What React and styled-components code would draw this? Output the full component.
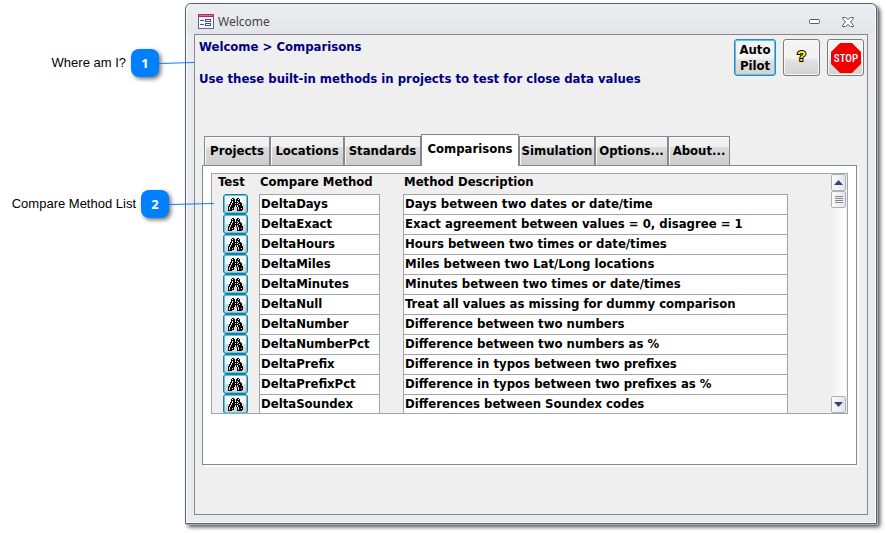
import React, { useState } from "react";
import styled, { createGlobalStyle, css } from "styled-components";

const navy = "#000080";
const face = "#efefef";
const line = "#85888f";
const soft = "#a3a4a8";
const blue = "#0080ff";

const GlobalStyle = createGlobalStyle`
  *, *::before, *::after { box-sizing: border-box; }
  body {
    margin: 0;
    background: #fff;
    color: #000;
    font: bold 13px/16px "DejaVu Sans Condensed", "DejaVu Sans", sans-serif;
  }
  button { font: inherit; color: inherit; padding: 0; margin: 0; }
`;

const Page = styled.main`
  display: grid;
  grid-template-columns: 185px 1fr;
  align-items: start;
  padding: 3px 9px 9px 0;
`;

/* Callouts beside the window */

const Callouts = styled.aside`
  display: flex;
  flex-direction: column;
  align-items: flex-end;
  gap: 113px;
  padding-top: 46px;
`;

const Callout = styled.div`
  position: relative;
  display: flex;
  align-items: center;
  gap: 5px;
  margin-right: ${(p) => p.$inset}px;
  font: 13px/16px "Liberation Sans", Arial, sans-serif;
  white-space: nowrap;
`;

const Badge = styled.span`
  width: 28px;
  height: 28px;
  border-radius: 8px;
  background: ${blue};
  box-shadow: 2px 2px 4px rgba(0, 0, 0, 0.55);
  color: #fff;
  font: bold 13px/28px "Noto Sans", sans-serif;
  text-align: center;
`;

const Leader = styled.svg`
  position: absolute;
  left: 100%;
  top: 12px;
  z-index: 1;
  width: ${(p) => p.$length}px;
  height: 4px;
  stroke: ${blue};
  overflow: visible;
`;

/* Window frame */

const Window = styled.section`
  padding: 0 8px 8px;
  border: 1px solid #5b616a;
  border-radius: 6px 6px 0 0;
  background: #e9ebf0;
  box-shadow: inset 0 0 0 1px #fff, 1px 1px 0 #a9afb8, 3px 3px 4px rgba(0, 0, 0, 0.7);
`;

const TitleBar = styled.header`
  display: flex;
  align-items: center;
  gap: 4px;
  height: 30px;
  margin: 0 -7px;
  padding: 5px 12px 0 11px;
  border-radius: 5px 5px 0 0;
  background: linear-gradient(#eceef1, #e3e5ea);
`;

const WindowTitle = styled.h1`
  flex: 1;
  margin: 0;
  color: #444;
  font: 12px/16px "Noto Sans", sans-serif;
`;

const FrameButton = styled.button`
  display: flex;
  align-items: center;
  justify-content: center;
  width: 30px;
  height: 18px;
  border: 0;
  background: none;
`;

const Client = styled.div`
  padding-bottom: 49px;
  border: 1px solid ${line};
  background: ${face};
`;

const Intro = styled.div`
  display: flex;
  justify-content: space-between;
  padding: 4px 3px 58px 4px;
  color: ${navy};
`;

const Headings = styled.div`
  display: flex;
  flex-direction: column;
  gap: 16px;
  height: 37px;
`;

const Heading = styled.p`
  margin: 0;
  white-space: nowrap;
`;

const Actions = styled.div`
  display: flex;
  gap: 7px;
  color: #000;
`;

const ActionButton = styled.button`
  display: flex;
  align-items: center;
  justify-content: center;
  width: ${(p) => (p.$wide ? 42 : 37)}px;
  height: 37px;
  border: 1px solid #7c7c7c;
  border-radius: 3px;
  background: linear-gradient(#f3f3f3 0 50%, #e0e0e0 60%, #d2d2d2);
  box-shadow: inset 0 0 0 1px #f8f8f8;
  ${(p) =>
    p.$wide &&
    css`
      border-color: #3c83ad;
      box-shadow: inset 0 0 0 1px #46ccf4;
    `}
`;

const HelpMark = styled.span`
  margin-bottom: 3px;
  color: #fff200;
  font: bold 15px/16px "Liberation Sans", Arial, sans-serif;
  -webkit-text-stroke: 2px #000;
  paint-order: stroke fill;
`;

/* Tabs */

const TabArea = styled.div`
  margin: 0 10px 0 7px;
`;

const TabList = styled.div`
  display: grid;
  grid-template-columns: 66px 74px 77px 98px 76px 73px 62px;
  align-items: end;
  height: 31px;
  padding-left: 2px;
`;

const Tab = styled.button`
  height: 29px;
  border: 1px solid ${line};
  border-width: 1px 1px 0;
  background: linear-gradient(#f0f0f0 0 35%, #dcdcdc 35%, #cdcdcd);
  box-shadow: inset 1px 1px 0 #fafafa;
  white-space: nowrap;
  ${(p) =>
    p.$active &&
    css`
      position: relative;
      height: 32px;
      margin-bottom: -1px;
      padding-bottom: 3px;
      background: #fff;
    `}
`;

const TabPanel = styled.div`
  padding: 7px 8px 50px;
  border: 1px solid ${line};
  background: #fff;
  box-shadow: 2px 2px 0 #fafafa;
`;

/* Method list */

const ListFrame = styled.div`
  display: flex;
  height: 241px;
  border: 1px solid ${soft};
  background: ${face};
  overflow: hidden;
`;

const MethodTable = styled.table`
  flex: 1;
  align-self: flex-start;
  table-layout: fixed;
  border-collapse: separate;
  border-spacing: 0;
`;

const HeadCell = styled.th`
  width: ${(p) => p.$width};
  height: 20px;
  padding: 0 0 4px ${(p) => p.$indent || 1}px;
  text-align: left;
  white-space: nowrap;
`;

const Cell = styled.td`
  height: 20px;
  padding: 0 ${(p) => p.$after || 0}px 0 ${(p) => p.$before || 0}px;
`;

const Value = styled.div`
  height: 20px;
  padding: 1px 0 0 1px;
  border: 1px solid ${soft};
  border-bottom: 0;
  background: #fff;
  line-height: 16px;
  white-space: nowrap;
  overflow: hidden;
`;

const TestButton = styled.button`
  display: flex;
  align-items: center;
  justify-content: center;
  width: 25px;
  height: 20px;
  padding-right: 1px;
  border: 1px solid #33748c;
  border-radius: 3px;
  background: linear-gradient(#f5f5f5 0 50%, #dcdcdc 50%, #d2d2d2);
  box-shadow: inset 0 0 0 1px #45cdf2;
`;

const ScrollBar = styled.div`
  display: flex;
  flex-direction: column;
  width: 15px;
  margin-right: 1px;
  background: linear-gradient(90deg, #efefef, #fff);
`;

const ScrollPart = styled.button`
  display: flex;
  align-items: center;
  justify-content: center;
  width: 15px;
  height: 17px;
  margin-top: ${(p) => (p.$last ? "auto" : 0)};
  border: 1px solid #adb2ba;
  border-radius: 2px;
  background: linear-gradient(90deg, #fbfbfb, #e3e5e8);
`;

const binocularRows = [
  "....##...##....",
  "...#.##.##.#...",
  "...####.####...",
  "...#.##.#.##...",
  "..##.#####.##..",
  "..#.###.#.####.",
  ".##.#######.##.",
  ".#.####.#.####.",
  "##.####.#.#####",
  "#.####...#.####",
  "#.##.#...#.##.#",
  "#.####...#.####",
  "####.....#####.",
];

const binocularPath = binocularRows
  .flatMap((row, y) => [...row].map((c, x) => (c === "#" ? `M${x} ${y}h1v1h-1z` : "")))
  .join("");

const Binoculars = () => (
  <svg width="15" height="13" viewBox="0 0 15 13" shapeRendering="crispEdges" aria-hidden="true">
    <path d={binocularPath} />
  </svg>
);

const FormIcon = () => (
  <svg width="16" height="15" viewBox="0 0 16 15" shapeRendering="crispEdges" aria-hidden="true">
    <rect x="0.5" y="0.5" width="15" height="14" fill="#f4f6fb" stroke="#5a6b98" />
    <rect width="16" height="3" fill="#b52b57" />
    <rect x="1" y="1" width="14" height="1" fill="#dc6d8e" />
    <path d="M2 6h4v1H2zM2 10h4v1H2z" fill="#41557f" />
    <path d="M7.5 5.5h5v2h-5zM7.5 9.5h5v2h-5z" fill="#fff" stroke="#41557f" />
  </svg>
);

const StopIcon = () => (
  <svg width="30" height="30" viewBox="0 0 30 30" role="img" aria-label="Stop">
    <path d="M9 0h12l9 9v12l-9 9H9l-9-9V9z" fill="#f00000" />
    <text
      x="15"
      y="19"
      textAnchor="middle"
      fill="#fff"
      fontFamily="'Roboto Condensed', 'Liberation Sans Narrow', Roboto, sans-serif"
      fontSize="11"
      fontWeight="500"
    >
      STOP
    </text>
  </svg>
);

const methods = [
  ["DeltaDays", "Days between two dates or date/time"],
  ["DeltaExact", "Exact agreement between values = 0, disagree = 1"],
  ["DeltaHours", "Hours between two times or date/times"],
  ["DeltaMiles", "Miles between two Lat/Long locations"],
  ["DeltaMinutes", "Minutes between two times or date/times"],
  ["DeltaNull", "Treat all values as missing for dummy comparison"],
  ["DeltaNumber", "Difference between two numbers"],
  ["DeltaNumberPct", "Difference between two numbers as %"],
  ["DeltaPrefix", "Difference in typos between two prefixes"],
  ["DeltaPrefixPct", "Difference in typos between two prefixes as %"],
  ["DeltaSoundex", "Differences between Soundex codes"],
];

const tabs = ["Projects", "Locations", "Standards", "Comparisons", "Simulation", "Options...", "About..."];

export default function App() {
  const [active, setActive] = useState("Comparisons");
  return (
    <>
      <GlobalStyle />
      <Page>
        <Callouts>
          <Callout $inset={26}>
            Where am I?
            <Badge>1</Badge>
            <Leader $length={35} viewBox="0 0 35 4" preserveAspectRatio="none">
              <path d="M0 2.5L35 1.5" />
            </Leader>
          </Callout>
          <Callout $inset={16}>
            Compare Method List
            <Badge>2</Badge>
            <Leader $length={45} viewBox="0 0 45 4" preserveAspectRatio="none">
              <path d="M0 2.5L45 1.5" />
            </Leader>
          </Callout>
        </Callouts>

        <Window>
          <TitleBar>
            <FormIcon />
            <WindowTitle>Welcome</WindowTitle>
            <FrameButton aria-label="Minimize">
              <svg width="11" height="5" viewBox="0 0 11 5">
                <rect x="0.5" y="0.5" width="10" height="4" rx="1" fill="#fff" stroke="#555b66" />
              </svg>
            </FrameButton>
            <FrameButton aria-label="Close">
              <svg width="12" height="10" viewBox="0 0 12 10">
                <path
                  d="M.5.5h3l2.500 2 2.500-2h3v1L8.500 5l3 3.500v1h-3L6 7.500l-2.500 2h-3v-1L3.500 5l-3-3.500z"
                  fill="#fff"
                  stroke="#555b66"
                />
              </svg>
            </FrameButton>
          </TitleBar>

          <Client>
            <Intro>
              <Headings>
                <Heading>Welcome &gt; Comparisons</Heading>
                <Heading>Use these built-in methods in projects to test for close data values</Heading>
              </Headings>
              <Actions>
                <ActionButton $wide>
                  Auto
                  <br />
                  Pilot
                </ActionButton>
                <ActionButton aria-label="Help">
                  <HelpMark>?</HelpMark>
                </ActionButton>
                <ActionButton aria-label="Stop">
                  <StopIcon />
                </ActionButton>
              </Actions>
            </Intro>

            <TabArea>
              <TabList role="tablist">
                {tabs.map((name) => (
                  <Tab
                    key={name}
                    role="tab"
                    aria-selected={name === active}
                    $active={name === active}
                    onClick={() => setActive(name)}
                  >
                    {name}
                  </Tab>
                ))}
              </TabList>
              <TabPanel role="tabpanel">
                <ListFrame>
                  <MethodTable>
                    <thead>
                      <tr>
                        <HeadCell $width="47px" $indent={6}>Test</HeadCell>
                        <HeadCell $width="144px">Compare Method</HeadCell>
                        <HeadCell $width="auto">Method Description</HeadCell>
                      </tr>
                    </thead>
                    <tbody>
                      {methods.map(([name, description]) => (
                        <tr key={name}>
                          <Cell $before={11}>
                            <TestButton aria-label={`Test ${name}`}>
                              <Binoculars />
                            </TestButton>
                          </Cell>
                          <Cell $after={23}>
                            <Value>{name}</Value>
                          </Cell>
                          <Cell $after={43}>
                            <Value>{description}</Value>
                          </Cell>
                        </tr>
                      ))}
                    </tbody>
                  </MethodTable>
                  <ScrollBar>
                    <ScrollPart aria-label="Scroll up">
                      <svg width="9" height="5" viewBox="0 0 9 5">
                        <path d="M0 5L4.500 0 9 5z" fill="#35466f" />
                      </svg>
                    </ScrollPart>
                    <ScrollPart aria-label="Scroll position">
                      <svg width="8" height="8" viewBox="0 0 8 8">
                        <path d="M0 .5h8M0 2.500h8M0 4.500h8M0 6.500h8" stroke="#84878d" />
                      </svg>
                    </ScrollPart>
                    <ScrollPart $last aria-label="Scroll down">
                      <svg width="9" height="5" viewBox="0 0 9 5">
                        <path d="M0 0L4.500 5 9 0z" fill="#35466f" />
                      </svg>
                    </ScrollPart>
                  </ScrollBar>
                </ListFrame>
              </TabPanel>
            </TabArea>
          </Client>
        </Window>
      </Page>
    </>
  );
}
